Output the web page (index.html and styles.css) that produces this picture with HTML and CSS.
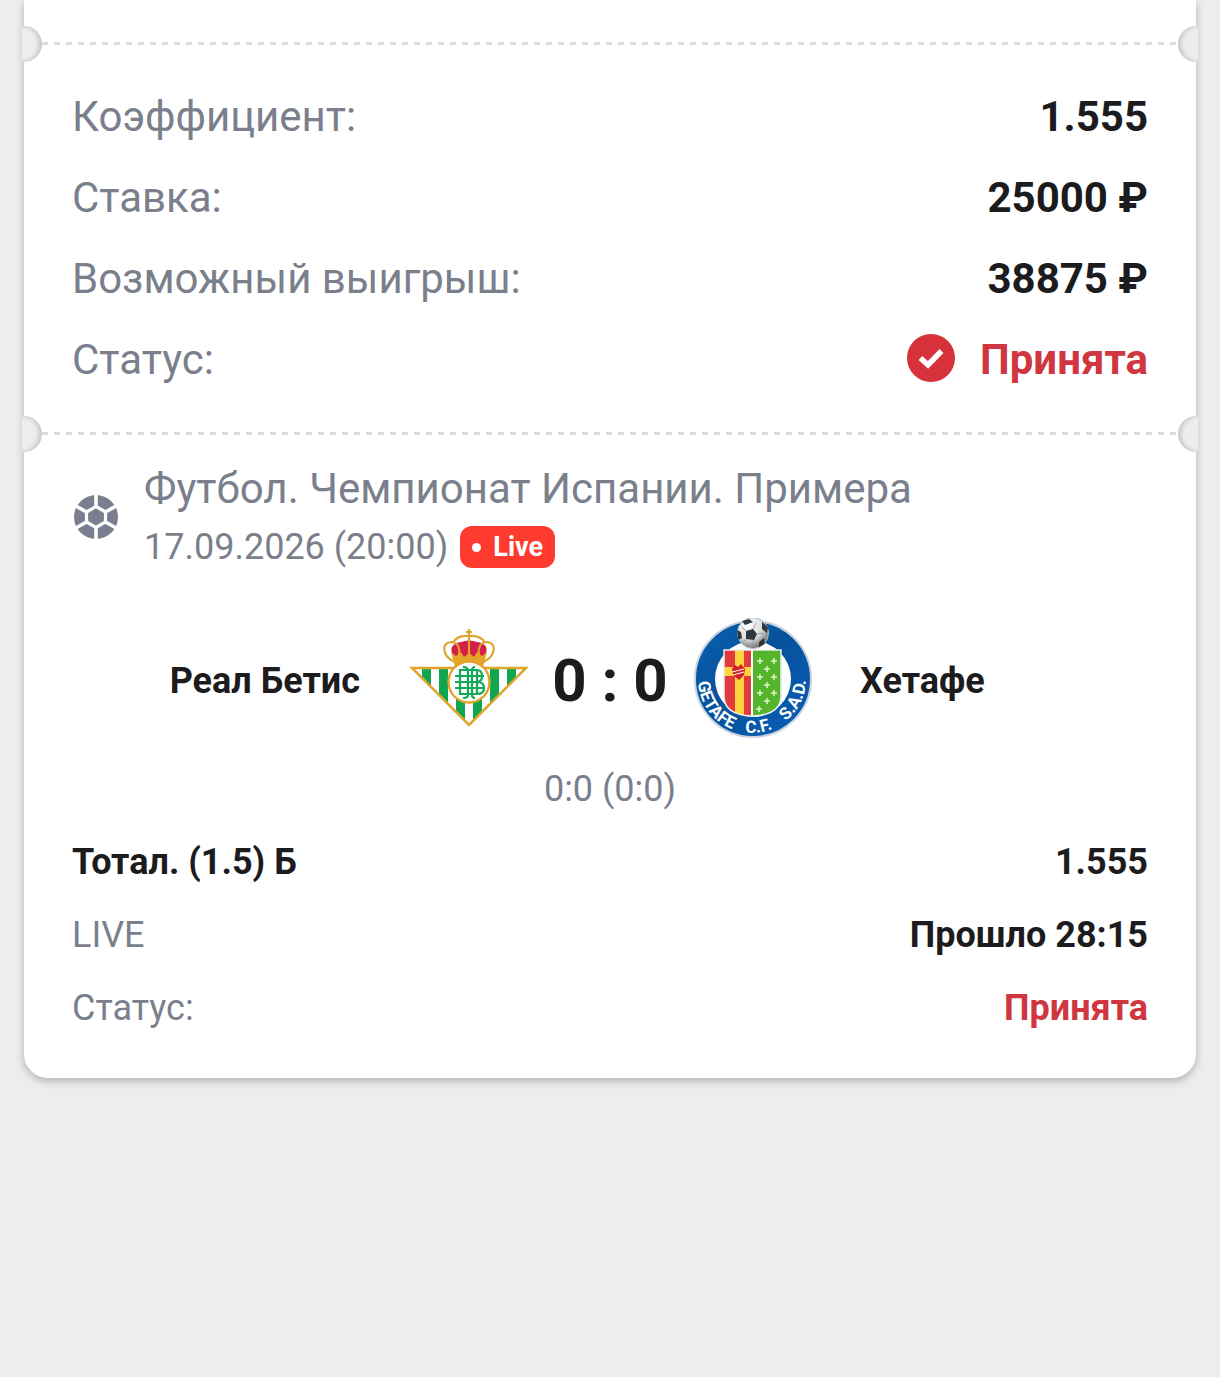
FILE: index.html
```html
<!DOCTYPE html>
<html lang="ru">
<head>
<meta charset="utf-8">
<meta name="viewport" content="width=device-width, initial-scale=1">
<title>Купон</title>
<link rel="stylesheet" href="styles.css">
</head>
<body>
<main class="ticket">
  <div class="tear"></div>
  <dl class="summary">
    <div class="row"><dt>Коэффициент:</dt><dd>1.555</dd></div>
    <div class="row"><dt>Ставка:</dt><dd>25000 ₽</dd></div>
    <div class="row"><dt>Возможный выигрыш:</dt><dd>38875 ₽</dd></div>
    <div class="row"><dt>Статус:</dt><dd class="accepted">
      <svg class="check" viewBox="0 0 48 48" aria-hidden="true"><circle cx="23" cy="22" r="24" fill="#d7323b"/><path d="M12.500 22l7.500 7L33.500 15" fill="none" stroke="#fff" stroke-width="5.500"/></svg>
      Принята</dd></div>
  </dl>
  <div class="tear"></div>
  <section class="event">
    <header class="event-head">
      <svg class="ball" viewBox="0 0 44 44" aria-hidden="true">
        <circle cx="22" cy="22" r="22" fill="#7a7e8e"/>
        <path d="M22 11.500L31.500 17v10L22 32.500 12.500 27V17z" fill="#7a7e8e" stroke="#fff" stroke-width="3.200"/>
        <path d="M22 11.500V-1M31.500 17L43 10.500M31.500 27L43 33.500M22 32.500V45M12.500 27L1 33.500M12.500 17L1 10.500" stroke="#fff" stroke-width="3.600"/>
      </svg>
      <div>
        <h1 class="league">Футбол. Чемпионат Испании. Примера</h1>
        <p class="when"><time datetime="2026-09-17T20:00">17.09.2026 (20:00)</time><span class="live">Live</span></p>
      </div>
    </header>
    <div class="match">
      <span class="team home">Реал Бетис</span>
      <svg class="crest" viewBox="0 0 120 120" aria-hidden="true">
        <defs><clipPath id="tri"><path d="M4 50H118L61 107z"/></clipPath></defs>
        <path d="M4 50H118L61 107z" fill="#fff"/>
        <g clip-path="url(#tri)" fill="#10a650"><path d="M14 48h9v60h-9zM31 48h9v60h-9zM48 48h9v60h-9zM65 48h9v60h-9zM82 48h9v60h-9zM99 48h9v60h-9z"/></g>
        <path d="M4 50H118L61 107z" fill="none" stroke="#dfa52b" stroke-width="2.500"/>
        <g transform="translate(1 1)">
        <path d="M43 34Q40 25 52 23Q60 20 68 23Q80 25 77 34L73 44H47z" fill="#d51f49"/>
        <path d="M46 43C34 38 31 24 42 23C50 23 51 31 50 36M74 43C86 38 89 24 78 23C70 23 69 31 70 36M44 24Q48 16 59 17M76 24Q72 16 61 17M60 10V37M57 13h6" fill="none" stroke="#dfa52b" stroke-width="2.200"/>
        <path d="M42 33l5 4 5-4 3 5 5-4 5 4 3-5 5 4 5-4-4 15H46z" fill="#e5a52b"/>
        <circle cx="60" cy="63" r="20.500" fill="#fff" stroke="#dfa52b" stroke-width="2.400"/>
        <path d="M54 48q5 0 5 4v24q0 3-5 3M66 48q-3 0-3 4v24q0 3 3 3M51 51H68q5 0 5 6t-5 6q7 0 7 6t-7 6H51M51 50v26M68 51v24M46 57h29M46 63h22M46 69h29" fill="none" stroke="#12a858" stroke-width="2.200"/>
        </g>
      </svg>
      <strong class="score">0 : 0</strong>
      <svg class="crest" viewBox="0 0 120 120" aria-hidden="true">
        <defs>
          <linearGradient id="sea" x2="1" y2="1"><stop stop-color="#0862b0"/><stop offset=".45" stop-color="#07519b"/><stop offset="1" stop-color="#0760b8"/></linearGradient>
          <radialGradient id="leather" cx=".35" cy=".25" r=".75"><stop stop-color="#fff"/><stop offset=".6" stop-color="#d9dcdd"/><stop offset="1" stop-color="#777"/></radialGradient>
          <clipPath id="shield"><path d="M31 32H88V78Q88 97 59 98Q31 97 31 78z"/></clipPath>
          <clipPath id="football"><circle cx="60" cy="15" r="16"/></clipPath>
          <path id="rim" d="M5 61A54 54 0 0 0 59 115A54 54 0 0 0 112 51"/>
        </defs>
        <g transform="translate(1 0)">
        <circle cx="60" cy="61" r="58" fill="url(#sea)" stroke="#c9d3df" stroke-width="2"/>
        <circle cx="60" cy="61" r="38" fill="#fff"/>
        <g clip-path="url(#shield)">
          <path d="M31 32h28v67H31z" fill="#e33a3d"/><path d="M42 32h9v67h-9zM31 49h28v9H31z" fill="#ffd43b"/>
          <path d="M59 32h30v67H59z" fill="#54b52c"/>
          <path d="M59 32v67" stroke="#fff" stroke-width="2"/>
          <path d="M64 43h6m-3-3v6M78 43h6m-3-3v6M71 51h6m-3-3v6M64 59h6m-3-3v6M78 59h6m-3-3v6M71 67h6m-3-3v6M64 75h6m-3-3v6M78 75h6m-3-3v6M71 83h6m-3-3v6M63 91h6m-3-3v6" stroke="#e0f4c4" stroke-width="1.500"/>
          <path d="M39 51l3-4 3 2 3-3 4 5-1 6-5 5-6-5z" fill="#d61f2b"/><path d="M39 54l12-3M40 57l11-3" stroke="#fff"/>
        </g>
        <path d="M31 32H88V78Q88 97 59 98Q31 97 31 78z" fill="none" stroke="#e7edf1" stroke-width="1.500"/>
        <circle cx="60" cy="15" r="15.500" fill="url(#leather)" stroke="#b7bec3"/>
        <g clip-path="url(#football)" fill="#30363a"><path d="M53 13l7-2 4 5-3 6-8-1zM49 3l7-2 4 3-8 3zM44 12l4 2 1 6-4 2zM69 4l6 5-1 6-5-4zM66 24l5-4 1 6-6 3z"/><path d="M60 11l3-6M61 22l-3 6M53 13l-4-4M53 21l-4 4M64 16l6-1" fill="none" stroke="#9ca2a6"/></g>
        <text class="crest-text"><textPath href="#rim" startOffset="3">GETAFE</textPath></text>
        <text class="crest-text"><textPath href="#rim" startOffset="78">C.F.</textPath></text>
        <text class="crest-text"><textPath href="#rim" startOffset="121">S.A.D.</textPath></text>
        </g>
      </svg>
      <span class="team">Хетафе</span>
    </div>
    <p class="periods">0:0 (0:0)</p>
    <dl class="outcome">
      <div class="row"><dt class="pick">Тотал. (1.5) Б</dt><dd>1.555</dd></div>
      <div class="row"><dt>LIVE</dt><dd>Прошло 28:15</dd></div>
      <div class="row"><dt>Статус:</dt><dd class="accepted">Принята</dd></div>
    </dl>
  </section>
</main>
</body>
</html>
```
FILE: styles.css
```css
* { box-sizing: border-box; }
body {
  margin: 0;
  min-height: 100vh;
  background: #ebedee;
  color: #1c1c1e;
  font-family: Roboto, sans-serif;
}
h1, p, dl, dd { margin: 0; }
.ticket {
  margin: 0 24px;
  padding: 26px 0 49px;
  background: #fff;
  border-radius: 0 0 24px 24px;
  box-shadow: 0 3px 8px rgba(0, 0, 0, .26);
}
.tear {
  position: relative;
  height: 36px;
  background: repeating-linear-gradient(90deg, #dcdcdc 0 6px, transparent 6px 12px) 18px 16px / calc(100% - 36px) 3px no-repeat;
}
.tear::before,
.tear::after {
  content: "";
  position: absolute;
  top: 0;
  width: 36px;
  height: 36px;
  border-radius: 50%;
  background: #ebedee;
}
.tear::before {
  left: -18px;
  box-shadow: inset -3px 0 4px rgba(0, 0, 0, .16);
  clip-path: inset(0 0 0 16px);
}
.tear::after {
  right: -18px;
  box-shadow: inset 3px 0 4px rgba(0, 0, 0, .16);
  clip-path: inset(0 16px 0 0);
}
.row {
  display: flex;
  justify-content: space-between;
  align-items: center;
}
dt { color: #7b7f8c; }
dd { font-weight: 700; }
.summary {
  display: grid;
  gap: 33px;
  padding: 31px 48px 32px;
  font-size: 42px;
  line-height: 48px;
}
.summary .accepted {
  display: flex;
  align-items: center;
  gap: 24px;
}
.check {
  width: 48px;
  height: 48px;
  overflow: visible;
}
.accepted { color: #cf363f; }
.event { padding: 12px 48px 0; }
.event-head {
  display: flex;
  align-items: center;
  gap: 26px;
  padding-left: 2px;
  color: #7b7f8c;
}
.ball { width: 44px; height: 44px; }
.league {
  font-size: 42px;
  font-weight: 400;
  line-height: 50px;
}
.when {
  display: flex;
  align-items: center;
  gap: 12px;
  margin-top: 10px;
  font-size: 36px;
  line-height: 46px;
}
.live {
  display: flex;
  align-items: center;
  gap: 12px;
  height: 42px;
  padding: 0 12px;
  border-radius: 12px;
  background: #ff3b30;
  color: #fff;
  font-size: 27px;
  font-weight: 700;
}
.live::before {
  content: "";
  width: 9px;
  height: 9px;
  border-radius: 50%;
  background: #fff;
}
.match {
  display: grid;
  grid-template-columns: 1fr 120px 164px 120px 1fr;
  align-items: center;
  margin-top: 48px;
}
.team {
  padding: 6px 48px 0;
  font-size: 36px;
  font-weight: 700;
}
.home { text-align: right; }
.crest { width: 120px; height: 120px; }
.crest-text {
  fill: #fff;
  font-family: Roboto, sans-serif;
  font-size: 17px;
  font-weight: 700;
}
.score {
  padding-top: 6px;
  font-size: 60px;
  line-height: 72px;
  text-align: center;
}
.periods {
  margin-top: 30px;
  color: #7b7f8c;
  font-size: 36px;
  line-height: 42px;
  text-align: center;
}
.outcome {
  display: grid;
  gap: 31px;
  margin-top: 31px;
  font-size: 36px;
  line-height: 42px;
}
.pick {
  color: #1c1c1e;
  font-weight: 700;
}
```
